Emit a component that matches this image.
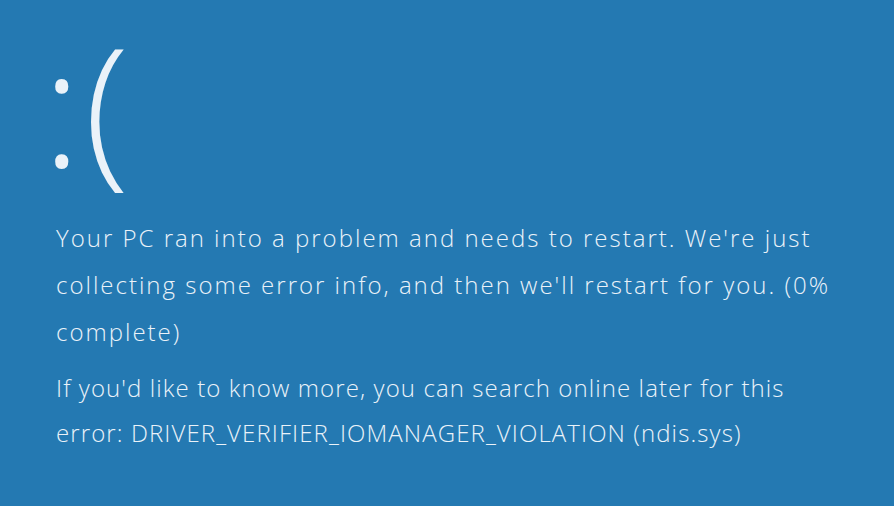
export default function App() {
  return (
    <div
      className="w-[894px] h-[506px] bg-[#2479b2] text-[#eaf2f9]"
      style={{ fontFamily: '"Open Sans", "Noto Sans", sans-serif' }}
    >
      <div className="h-[214px] pt-[3px] pl-[42px] text-[165px] leading-[200px] font-light tracking-[3px]">
        <span className="inline-block pr-[10px]">:(</span>
      </div>
      <div className="pl-[56px]">
        <p className="text-[24px] leading-[47px] font-light tracking-[2px] whitespace-nowrap">
          Your PC ran into a problem and needs to restart. We're just
          <br />
          collecting some error info, and then we'll restart for you. (0%
          <br />
          complete)
        </p>
        <p className="mt-[10px] text-[24px] leading-[45px] font-light tracking-[1.1px] whitespace-nowrap">
          If you'd like to know more, you can search online later for this
          <br />
          error: DRIVER_VERIFIER_IOMANAGER_VIOLATION (ndis.sys)
        </p>
      </div>
    </div>
  );
}
